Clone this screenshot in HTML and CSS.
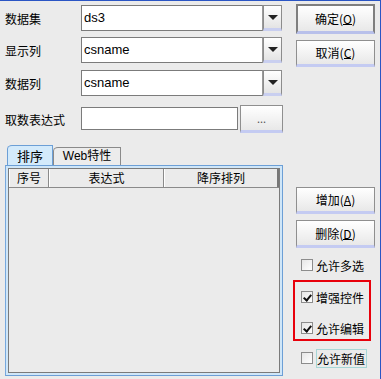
FILE: index.html
```html
<!DOCTYPE html>
<html lang="zh">
<head>
    <meta charset="UTF-8">
    <title>数据集设置</title>
    <link rel="stylesheet" href="styles.css">
</head>
<body>
    <div class="dialog">
        <div class="main">
            <div class="row">
                <span class="lbl">数据集</span>
                <div class="combo"><span class="field">ds3</span><span class="arrow"></span></div>
            </div>
            <div class="row row2">
                <span class="lbl">显示列</span>
                <div class="combo"><span class="field">csname</span><span class="arrow"></span></div>
            </div>
            <div class="row row3">
                <span class="lbl">数据列</span>
                <div class="combo"><span class="field">csname</span><span class="arrow"></span></div>
            </div>
            <div class="row expr">
                <span class="lbl">取数表达式</span>
                <span class="text"></span>
                <button class="btn dots">...</button>
            </div>

            <div class="tabs">
                <div class="tab active">排序</div>
                <div class="tab">Web特性</div>
            </div>
            <div class="panel">
                <div class="inner">
                    <div class="thead">
                        <div class="th c1">序号</div>
                        <div class="th c2">表达式</div>
                        <div class="th c3">降序排列</div>
                    </div>
                </div>
            </div>
        </div>

        <div class="side">
            <button class="btn default">确定(<u>O</u>)</button>
            <button class="btn cancel">取消(<u>C</u>)</button>
            <button class="btn add">增加(<u>A</u>)</button>
            <button class="btn del">删除(<u>D</u>)</button>

            <label class="check multi"><span class="box"></span>允许多选</label>
            <div class="marked">
                <label class="check"><span class="box on"></span>增强控件</label>
                <label class="check second"><span class="box on"></span>允许编辑</label>
            </div>
            <label class="check newval"><span class="box"></span><span class="focus">允许新值</span></label>
        </div>
    </div>
</body>
</html>
```

FILE: styles.css
```css
body {
    margin: 0;
    font-family: "Noto Sans CJK SC", "Liberation Sans", sans-serif;
    font-size: 12px;
    color: #000;
    background-color: #ebebeb;
}

.dialog {
    width: 381px;
    height: 379px;
    box-sizing: border-box;
    border-top: 1px solid #2a55c4;
    border-right: 1px solid #2a55c4;
    background-color: #ebebeb;
    display: flex;
    overflow: hidden;
}

.main {
    width: 284px;
    padding-top: 4px;
}

.row {
    display: flex;
    align-items: center;
    height: 26px;
}

.row2 {
    margin-top: 6px;
}

.row3 {
    margin-top: 7px;
}

.lbl {
    width: 81px;
    flex-shrink: 0;
    padding-left: 5px;
    box-sizing: border-box;
    white-space: nowrap;
}

.combo {
    display: flex;
    width: 201px;
    height: 26px;
}

.field {
    flex: 1;
    box-sizing: border-box;
    border: 1px solid #7b7b7b;
    border-right-color: #9a9a9a;
    background-color: #fff;
    font-family: "Liberation Sans", sans-serif;
    font-size: 13px;
    line-height: 24px;
    padding-left: 2px;
}

.arrow {
    width: 19px;
    box-sizing: border-box;
    border: 1px solid #8c8c8c;
    border-bottom: 3px solid #c9cff0;
    background: linear-gradient(#ffffff, #e4e4e4);
    position: relative;
}

.arrow::after {
    content: "";
    position: absolute;
    left: 4px;
    top: 9px;
    border-left: 5px solid transparent;
    border-right: 5px solid transparent;
    border-top: 5px solid #222;
}

.expr {
    margin-top: 9px;
    height: 28px;
}

.text {
    width: 157px;
    height: 23px;
    flex-shrink: 0;
    box-sizing: border-box;
    border: 1px solid #7b7b7b;
    background-color: #fff;
    margin-top: 2px;
    margin-bottom: 3px;
}

.btn {
    font-family: "Noto Sans CJK SC", "Liberation Sans", sans-serif;
    font-size: 12px;
    color: #000;
    box-sizing: border-box;
    border: 1px solid #8f8f8f;
    border-bottom: 3px solid #c4cbf2;
    background: linear-gradient(#ffffff, #e8e8e8);
    padding: 0;
    display: block;
}

.btn u {
    text-decoration: none;
    border-bottom: 1px solid #000;
    line-height: 11px;
    display: inline-block;
}

.dots {
    width: 43px;
    height: 28px;
    flex-shrink: 0;
    margin-left: 2px;
    font-size: 11px;
    line-height: 10px;
    color: #555;
}

.tabs {
    display: flex;
    align-items: flex-end;
    height: 20px;
    margin-top: 12px;
    padding-left: 7px;
}

.tab {
    height: 18px;
    box-sizing: border-box;
    border: 1px solid #8a8a8a;
    border-bottom: none;
    border-top-left-radius: 5px 4px;
    text-align: center;
    line-height: 17px;
    font-size: 12px;
}

.tab.active {
    width: 46px;
    height: 20px;
    line-height: 19px;
    background-color: #d3eafb;
    border-color: #6c9fd6;
    font-size: 13px;
}

.tab:not(.active) {
    width: 68px;
    background-color: #ececec;
    font-family: "Liberation Sans", "Noto Sans CJK SC", sans-serif;
    font-size: 12px;
}

.panel {
    width: 278px;
    height: 211px;
    margin-left: 5px;
    box-sizing: border-box;
    border: 1px solid #6c9fd6;
    border-left-color: #78a8dc;
    padding: 2px;
    background-color: #cfe6f8;
}

.inner {
    height: 100%;
    box-sizing: border-box;
    border: 1px solid #7a7a7a;
    background-color: #ebebeb;
}

.thead {
    display: flex;
    height: 18px;
    border-bottom: 1px solid #8a8a8a;
}

.th {
    box-sizing: border-box;
    border-left: 1px solid #fff;
    border-right: 1px solid #8a8a8a;
    text-align: center;
    line-height: 17px;
    font-size: 12px;
}

.c1 {
    width: 40px;
}

.c2 {
    width: 115px;
}

.c3 {
    width: 115px;
    border-right: 2px solid #777;
}

.side {
    width: 84px;
    padding-top: 3px;
    margin-left: 9px;
}

.side .btn {
    width: 79px;
    margin-left: 3px;
    height: 27px;
}

.side .default {
    height: 30px;
    border: 2px solid #7f7f7f;
    border-bottom: 3px solid #b8c0ea;
}

.side .cancel {
    margin-top: 6px;
}

.side .add {
    margin-top: 120px;
}

.side .del {
    margin-top: 6px;
    height: 28px;
}

.check {
    display: flex;
    align-items: center;
    height: 18px;
    padding-left: 8px;
    white-space: nowrap;
}

.box {
    width: 12px;
    height: 12px;
    box-sizing: border-box;
    border: 1px solid #8c8c8c;
    background: linear-gradient(135deg, #e6e6e6, #ffffff);
    margin-right: 3px;
    position: relative;
}

.box.on::after {
    content: "";
    position: absolute;
    left: 3px;
    top: 1px;
    width: 3px;
    height: 6px;
    border-right: 2px solid #111;
    border-bottom: 2px solid #111;
    transform: rotate(40deg);
}

.multi {
    margin-top: 8px;
}

.marked {
    width: 78px;
    box-sizing: border-box;
    border: 2px solid #e8000b;
    margin-top: 6px;
    padding: 6px 0 2px;
}

.marked .check {
    padding-left: 6px;
}

.marked .second {
    margin-top: 13px;
}

.newval {
    margin-top: 7px;
    height: 20px;
}

.focus {
    border: 1px solid #a6d6d6;
    padding: 0 1px 0 0;
    line-height: 17px;
}
```
